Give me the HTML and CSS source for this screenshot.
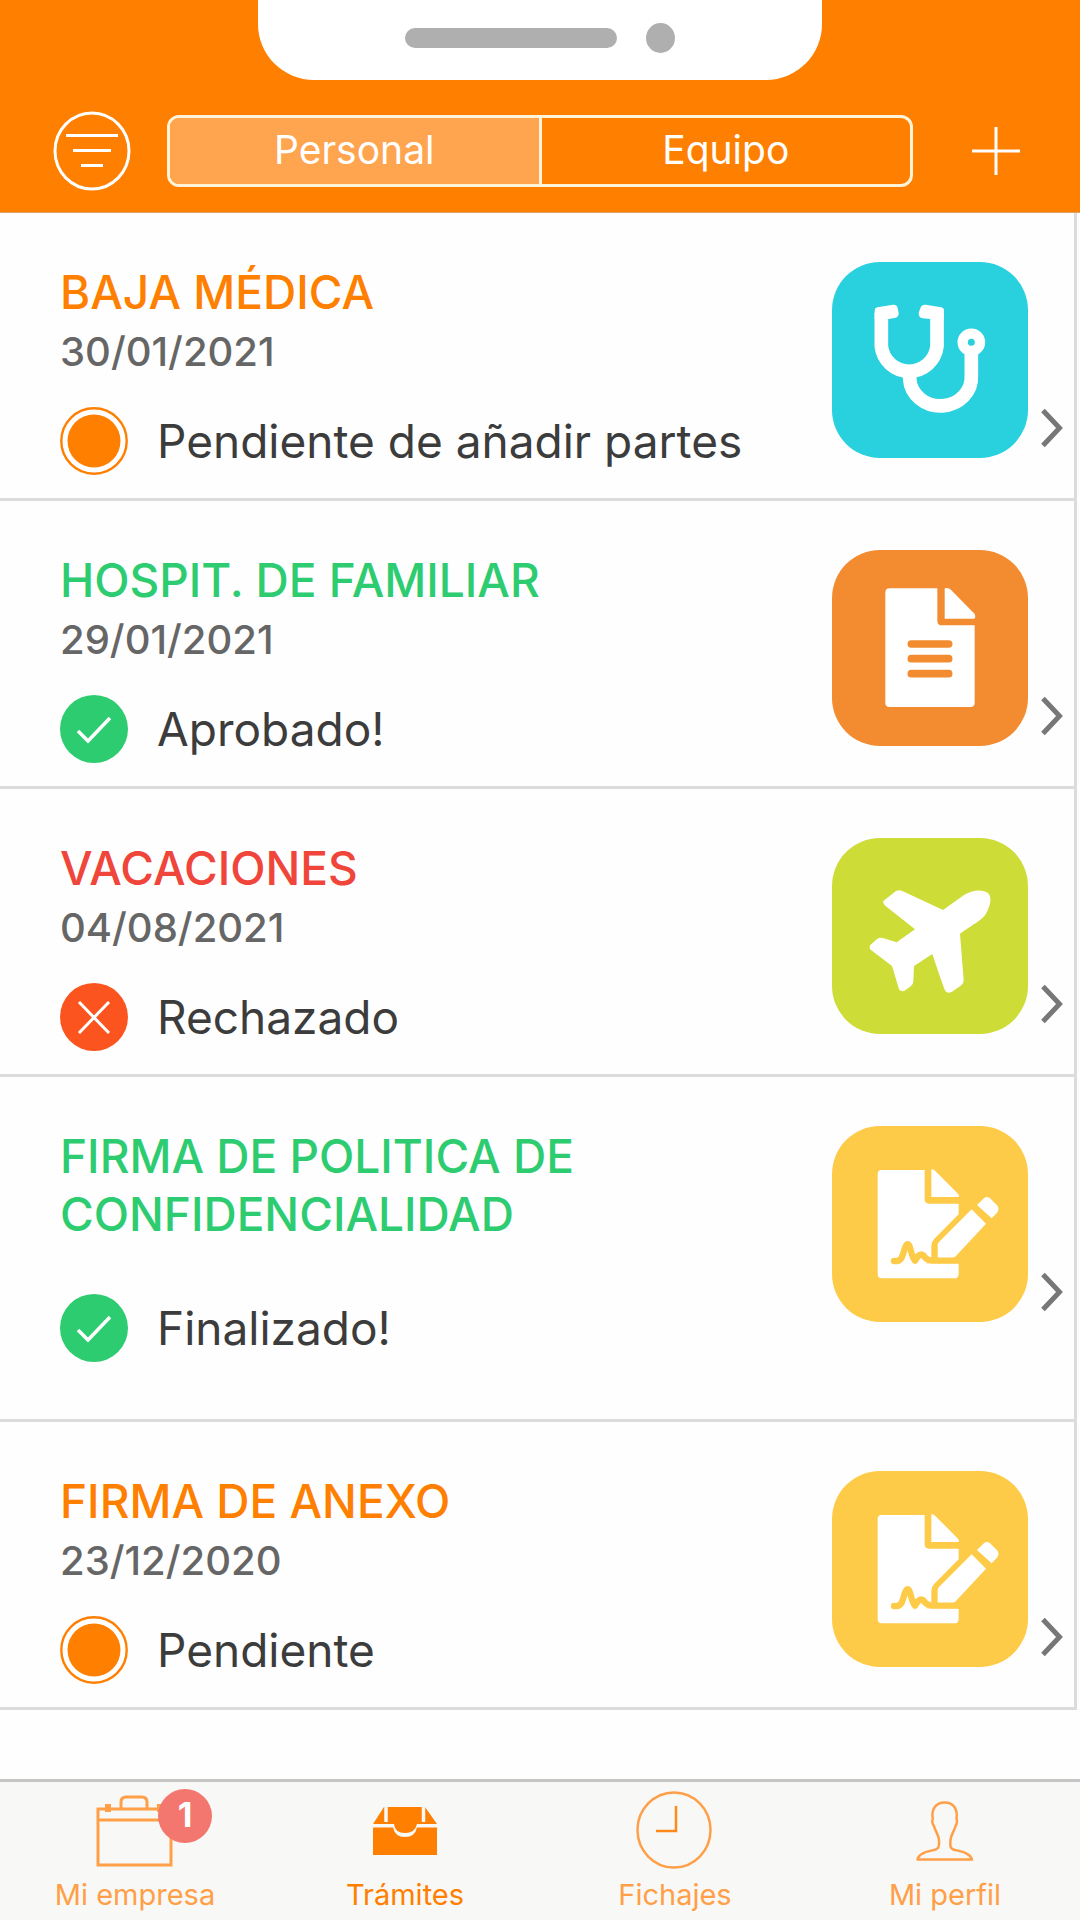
FILE: index.html
```html
<!DOCTYPE html>
<html lang="es">
<head>
<meta charset="utf-8">
<meta name="viewport" content="width=device-width, initial-scale=1">
<title>Trámites</title>
<link rel="stylesheet" href="styles.css">
</head>
<body>
<svg class="sprite" aria-hidden="true">
  <symbol id="check" viewBox="0 0 68 68">
    <circle cx="34" cy="34" r="34" fill="#2ecc71"/>
    <path d="M18 36l10 10 22-23" fill="none" stroke="#fff" stroke-width="3.500"/>
  </symbol>
  <symbol id="cross" viewBox="0 0 68 68">
    <circle cx="34" cy="34" r="34" fill="#fb541f"/>
    <path d="M19 19l30 31M49 19L19 50" fill="none" stroke="#fff" stroke-width="3"/>
  </symbol>
  <symbol id="pending" viewBox="0 0 68 68">
    <circle cx="34" cy="34" r="32.700" fill="#fff" stroke="#ff7f00" stroke-width="2.400"/>
    <circle cx="34" cy="34" r="26.500" fill="#ff7f00"/>
  </symbol>
  <symbol id="chevron" viewBox="0 0 22 40">
    <path d="M2 2.500L18.500 20 2 37.500" fill="none" stroke="#777" stroke-width="5"/>
  </symbol>
  <symbol id="sign" viewBox="157 78 588 588">
    <path d="M305 210H435V298Q435 311 448 311H537V343L464 416Q455 425 455 438V480L438 490H537V521Q537 535 523 535H307Q294 535 294 522V222Q294 210 305 210Z" fill="#fff"/>
    <path d="M455 208Q461 206 467 213L535 281Q541 289 535 291H455Z" fill="#fff"/>
    <path d="M474 475V435Q474 430 478 426L576 328L619 371L528 469Q522 475 515 475Z" fill="#fff"/>
    <path d="M592 315L611 296Q620 287 631 295L652 316Q661 326 652 338L636 355Z" fill="#fff"/>
    <path d="M343 483C365 486 368 471 374 449Q383 419 391 443C397 463 399 475 406 482C413 470 421 458 431 466Q440 481 460 482H540" fill="none" stroke="#fdcb48" stroke-width="19" stroke-linecap="round" stroke-linejoin="round"/>
  </symbol>
</svg>

<header class="header">
  <div class="notch"><span class="speaker"></span><span class="camera"></span></div>
  <div class="toolbar">
    <button class="icon-button" type="button" aria-label="Filtrar">
      <svg width="78" height="80" viewBox="0 0 78 80" fill="none" stroke="#fff">
        <ellipse cx="39" cy="40" rx="37" ry="38" stroke-width="3"/>
        <path d="M13 24.500h52M20 39.500h38M28 54.500h22" stroke-width="3"/>
      </svg>
    </button>
    <div class="segments">
      <button class="segment segment-active" type="button" aria-pressed="true">Personal</button>
      <button class="segment" type="button" aria-pressed="false">Equipo</button>
    </div>
    <button class="icon-button" type="button" aria-label="Añadir">
      <svg width="48" height="48" viewBox="0 0 48 48" fill="none" stroke="#fff" stroke-width="3"><path d="M24 0v48M0 24h48"/></svg>
    </button>
  </div>
</header>

<main class="main">
  <ul class="list">
    <li>
      <a class="row" href="#baja">
        <div class="info">
          <h2 class="title orange">BAJA MÉDICA</h2>
          <p class="date">30/01/2021</p>
          <p class="status"><svg class="state"><use href="#pending"/></svg>Pendiente de añadir partes</p>
        </div>
        <svg class="tile cyan" viewBox="157 99 588 588" fill="none" stroke="#fff" stroke-width="41" stroke-linejoin="round">
          <path d="M305 252V352A84 84 0 0 0 472 352V252"/>
          <path d="M285 270V244Q285 237 293 235L340 227Q353 226 354 238L357 252Q357 266 345 267L326 270ZM493 270V244Q493 237 485 235L438 227Q425 226 422 238L417 252Q417 266 429 268L452 270Z" fill="#fff" stroke="none"/>
          <path d="M390 440V450A92 85 0 0 0 575 440V370"/>
          <circle cx="575" cy="340" r="26" stroke-width="31"/>
        </svg>
        <svg class="chevron"><use href="#chevron"/></svg>
      </a>
    </li>
    <li>
      <a class="row" href="#hospitalizacion">
        <div class="info">
          <h2 class="title green">HOSPIT. DE FAMILIAR</h2>
          <p class="date">29/01/2021</p>
          <p class="status"><svg class="state"><use href="#check"/></svg>Aprobado!</p>
        </div>
        <svg class="tile amber" viewBox="157 62 588 588" fill="#fff">
          <path d="M330 177H473V274Q473 288 487 288H585V520Q585 533 572 533H330Q317 533 317 520V190Q317 177 330 177Z"/>
          <path d="M495 177Q506 174 515 183L583 252Q591 264 583 268H495Z"/>
          <path d="M395 344h112M395 388h112M395 433h112" stroke="#f38c30" stroke-width="23" stroke-linecap="round"/>
        </svg>
        <svg class="chevron"><use href="#chevron"/></svg>
      </a>
    </li>
    <li>
      <a class="row" href="#vacaciones">
        <div class="info">
          <h2 class="title red">VACACIONES</h2>
          <p class="date">04/08/2021</p>
          <p class="status"><svg class="state"><use href="#cross"/></svg>Rechazado</p>
        </div>
        <svg class="tile lime" viewBox="157 54 588 588" fill="#fff">
          <path d="M311 243L348 214Q358 208 368 213L490 270L552 226C585 206 612 210 625 219C636 230 635 252 619 281C605 302 582 311 541 341L552 480Q552 491 543 497L517 515Q504 522 497 513Q493 507 458 402L403 438L401 484Q401 492 394 498L377 511Q366 518 358 508L337 438L273 389Q268 384 271 376L293 356Q302 351 312 355L351 367L406 328L315 256Q309 251 311 243Z"/>
        </svg>
        <svg class="chevron"><use href="#chevron"/></svg>
      </a>
    </li>
    <li>
      <a class="row" href="#confidencialidad">
        <div class="info info-undated">
          <h2 class="title green">FIRMA DE POLITICA DE CONFIDENCIALIDAD</h2>
          <p class="status"><svg class="state"><use href="#check"/></svg>Finalizado!</p>
        </div>
        <svg class="tile yellow"><use href="#sign"/></svg>
        <svg class="chevron"><use href="#chevron"/></svg>
      </a>
    </li>
    <li>
      <a class="row" href="#anexo">
        <div class="info">
          <h2 class="title orange">FIRMA DE ANEXO</h2>
          <p class="date">23/12/2020</p>
          <p class="status"><svg class="state"><use href="#pending"/></svg>Pendiente</p>
        </div>
        <svg class="tile yellow"><use href="#sign"/></svg>
        <svg class="chevron"><use href="#chevron"/></svg>
      </a>
    </li>
  </ul>
</main>

<nav class="tabs">
  <a class="tab" href="#empresa">
    <span class="tab-icon">
      <svg width="80" height="80" viewBox="0 0 80 80" fill="none" stroke="#ff9f48" stroke-width="3">
        <path d="M3 20H76V76H3ZM3 31H76M26 20V13Q26 8 31 8H47Q52 8 52 13V20"/>
        <path d="M10 15h6v8h-6zM62 15h6v8h-6z" fill="#ff9f48" stroke="none"/>
      </svg>
      <span class="badge">1</span>
    </span>
    Mi empresa
  </a>
  <a class="tab tab-active" href="#tramites" aria-current="page">
    <span class="tab-icon">
      <svg width="80" height="80" viewBox="0 0 80 80">
        <path d="M19 18H60L72 35H52Q50 44 40 44T29 35H8Z" fill="#ff7f00"/>
        <path d="M8 38.500H28Q30 48 40 48T52 38.500H72V66H8Z" fill="#ff7f00"/>
        <path d="M21 17V33M58.500 17V33" stroke="#f8f8f6" stroke-width="3.500"/>
      </svg>
    </span>
    Trámites
  </a>
  <a class="tab" href="#fichajes">
    <span class="tab-icon">
      <svg width="80" height="80" viewBox="0 0 80 80" fill="none" stroke="#ff9f48" stroke-width="2.500">
        <ellipse cx="39" cy="41" rx="36.500" ry="37.500"/>
        <path d="M41 17V42H21" stroke="#ff8a1a"/>
      </svg>
    </span>
    Fichajes
  </a>
  <a class="tab" href="#perfil">
    <span class="tab-icon">
      <svg width="80" height="80" viewBox="0 0 80 80" fill="none" stroke="#ff9f48" stroke-width="2.500" stroke-linejoin="round">
        <path d="M12.500 70.500C14 64 22 62.500 29 61C34 60 34.500 57 34 51C33.500 45 30 42 29 37C27 35 27 31 27.800 30C26 20 31 13.500 39.700 13.500S53 20 51.500 30C52.500 31 52 35 50.500 37C49.500 42 46 45 45.500 51C45 57 45 60 50 61C57 62.500 65 64 67 70.500Z"/>
      </svg>
    </span>
    Mi perfil
  </a>
</nav>
</body>
</html>
```
FILE: styles.css
```css
* {
  box-sizing: border-box;
}

body {
  margin: 0;
  min-height: 100vh;
  display: flex;
  flex-direction: column;
  background: #fefefe;
  color: #3c3c3c;
  font-family: Inter, "Liberation Sans", sans-serif;
}

h2,
p,
ul {
  margin: 0;
  padding: 0;
}

a {
  color: inherit;
  text-decoration: none;
}

svg {
  display: block;
  flex: none;
}

button {
  margin: 0;
  padding: 0;
  border: 0;
  background: none;
  color: #fff;
  font: inherit;
}

.sprite {
  position: absolute;
  width: 0;
  height: 0;
}

/* Header */

.header {
  background: #ff7f00;
  border-bottom: 1px solid #d9a566;
}

.notch {
  display: flex;
  align-items: center;
  justify-content: center;
  gap: 29px;
  width: 564px;
  height: 80px;
  margin: 0 auto;
  padding: 0 0 5px;
  border-radius: 0 0 56px 56px;
  background: #fff;
}

.speaker {
  width: 212px;
  height: 20px;
  border-radius: 10px;
  background: #afafaf;
}

.camera {
  width: 29px;
  height: 30px;
  border-radius: 50%;
  background: #afafaf;
}

.toolbar {
  display: flex;
  align-items: center;
  padding: 31px 60px 21px 53px;
}

.segments {
  display: flex;
  flex: 1;
  height: 72px;
  margin: 0 59px 0 36px;
  border: 3px solid #fff4d8;
  border-radius: 12px;
  overflow: hidden;
}

.segment {
  flex: 1;
  padding-bottom: 3px;
  font-size: 39px;
  line-height: 48px;
}

.segment-active {
  border-right: 3px solid #fff4d8;
  background: #ffa44f;
}

/* List */

.list {
  margin-right: 3px;
  border-right: 3px solid #dcdcdc;
  list-style: none;
}

.row {
  display: flex;
  align-items: flex-start;
  border-bottom: 3px solid #dcdcdc;
}

.info {
  flex: 1;
  min-width: 0;
  padding: 50px 80px 23px 60px;
}

.info-undated {
  padding-bottom: 57px;
}

.title {
  max-width: 600px;
  font-size: 46px;
  font-weight: 500;
  line-height: 58px;
}

.date {
  margin-top: 7px;
  color: #666;
  font-size: 40px;
  font-weight: 500;
  line-height: 48px;
}

.status {
  display: flex;
  align-items: center;
  gap: 29px;
  margin-top: 31px;
  font-size: 46px;
  line-height: 68px;
  white-space: nowrap;
}

.info-undated .status {
  margin-top: 51px;
}

.state {
  width: 68px;
  height: 68px;
}

.tile {
  width: 196px;
  height: 196px;
  margin-top: 49px;
  border-radius: 48px;
}

.chevron {
  width: 22px;
  height: 40px;
  margin: 195px 11px 0 13px;
}

.orange { color: #ff7f00; }
.green { color: #2ecc71; }
.red { color: #f0453a; }

.cyan { background: #29d0de; }
.amber { background: #f38c30; }
.lime { background: #cddc37; }
.yellow { background: #fdcb48; }

/* Bottom tabs */

.tabs {
  display: grid;
  grid-template-columns: repeat(4, 1fr);
  margin-top: auto;
  border-top: 3px solid #c6c6c4;
  background: #f8f8f6;
}

.tab {
  display: flex;
  flex-direction: column;
  align-items: center;
  gap: 10px;
  padding: 7px 0 9px;
  color: #ff9f48;
  font-size: 29px;
  line-height: 32px;
}

.tab-active {
  color: #ff7f00;
}

.tab-icon {
  position: relative;
}

.badge {
  position: absolute;
  top: 0;
  left: 63px;
  width: 54px;
  height: 54px;
  border-radius: 50%;
  background: #f4776f;
  color: #fff;
  font-size: 34px;
  font-weight: 700;
  line-height: 52px;
  text-align: center;
}
```
